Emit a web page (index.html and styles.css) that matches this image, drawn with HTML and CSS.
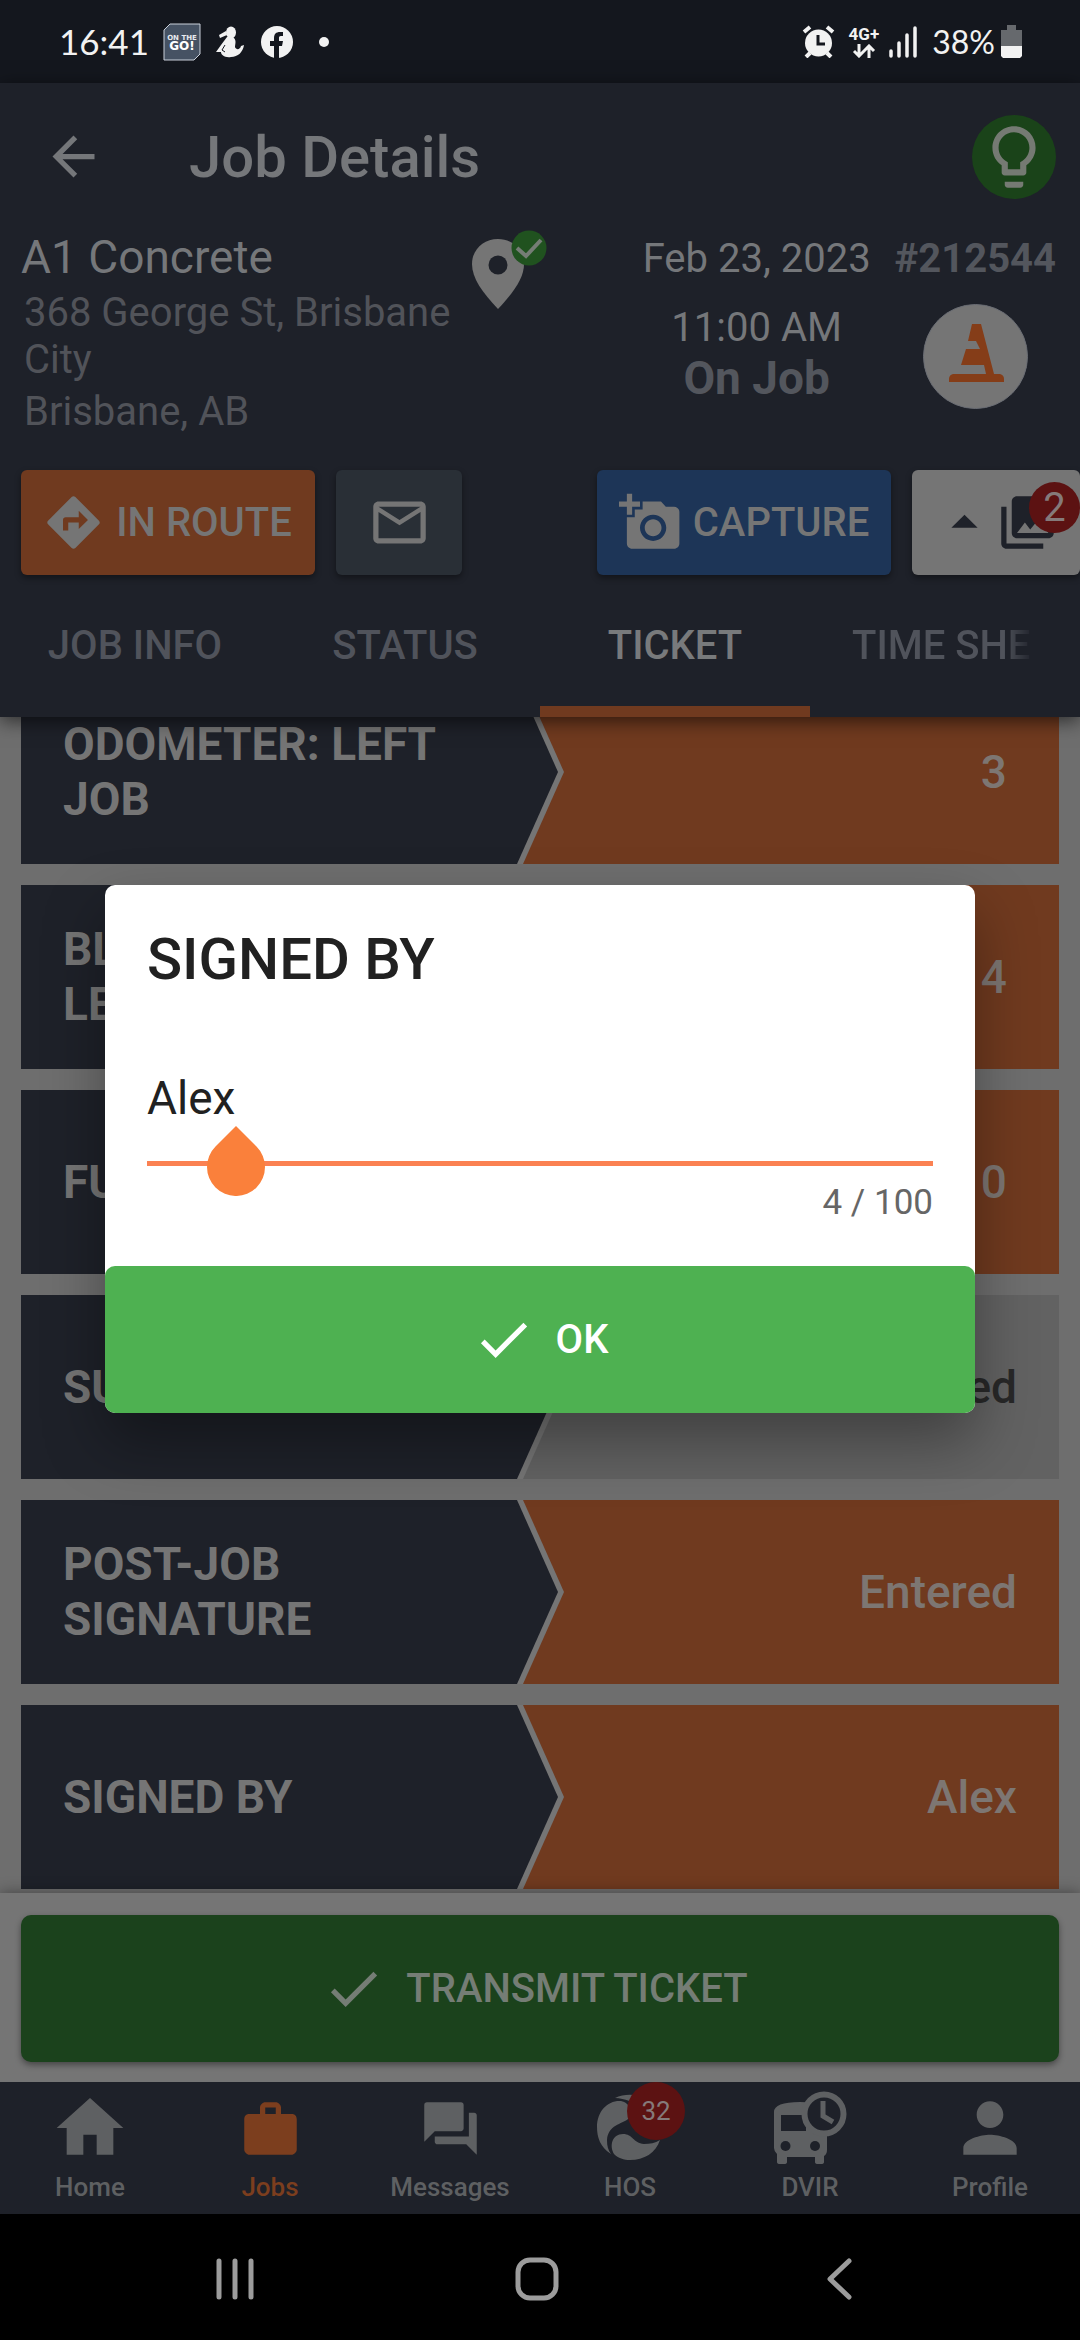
FILE: index.html
```html
<!DOCTYPE html>
<html lang="en">
<head>
<meta charset="utf-8">
<meta name="viewport" content="width=device-width, initial-scale=1">
<title>Job Details</title>
<link rel="stylesheet" href="styles.css">
</head>
<body>
<div class="statusbar">
  <div class="status-left">
    <span class="clock">16:41</span>
    <svg class="app-badge" viewBox="0 0 38 38" aria-hidden="true">
      <path d="M7 1H37V31L31 37H1V7Z" fill="#465263" stroke="#c9d0da" stroke-width="1"/>
      <text x="19" y="17" text-anchor="middle" class="tiny-top">ON THE</text>
      <text x="19" y="27" text-anchor="middle" class="tiny-go">GO!</text>
    </svg>
    <svg class="figure" viewBox="0 0 28 32" fill="#f2f2f2" aria-hidden="true">
      <ellipse cx="15" cy="6.500" rx="5" ry="6"/>
      <path d="M10 5L3 9L4 12L11 9ZM11 11H17C21 14 19 18 19 21C20 24 24 24 25 20L28 19C27 26 22 31 15 31C9 32 5 29 5 26L0 26L5 19Z"/>
      <path d="M9 19L6 24L9 26" fill="none" stroke="#14171e" stroke-width="1"/>
    </svg>
    <svg class="fb" viewBox="0 0 32 32" aria-hidden="true">
      <circle cx="16" cy="16" r="16" fill="#f2f2f2"/>
      <path d="M13 32V20H9V15H13V12C13 8 15 6 19 6H22V10H20C18 10 18 11 18 12V15H22L21 20H18V32Z" fill="#14171e"/>
    </svg>
    <span class="dot"></span>
  </div>
  <div class="status-right">
    <svg class="alarm" viewBox="0 0 33 33" aria-hidden="true">
      <circle cx="16.500" cy="18" r="13.500" fill="#f2f2f2"/>
      <path d="M2 7L8 2M25 2L31 7M8 28L4 32M25 28L29 32" stroke="#f2f2f2" stroke-width="4"/>
      <path d="M16 10V19H23" fill="none" stroke="#14171e" stroke-width="3"/>
    </svg>
    <span class="network">4G+
      <svg viewBox="0 0 24 14" aria-hidden="true"><path d="M7 0V12M2 7L7 12L12 7M17 14V2M12 7L17 2L22 7" fill="none" stroke="#f2f2f2" stroke-width="3"/></svg>
    </span>
    <svg class="signal" viewBox="0 0 28 32" aria-hidden="true"><path d="M2 25V30M10 17V30M18 9V30M26 2V30" stroke="#f2f2f2" stroke-width="3.500" stroke-linecap="round"/></svg>
    <span class="percent">38%</span>
    <svg class="battery" viewBox="0 0 21 33" aria-hidden="true"><path d="M6 0H15V5H21V21H0V5H6Z" fill="#66696d"/><path d="M0 21H21V31L19 33H2L0 31Z" fill="#f2f2f2"/></svg>
  </div>
</div>

<div class="app">
  <header class="header">
    <div class="titlebar">
      <button class="back" aria-label="Back"><svg class="icon" viewBox="0 0 24 24"><path d="M20 11H7.830l5.590-5.590L12 4l-8 8 8 8 1.410-1.410L7.830 13H20v-2z"/></svg></button>
      <h1>Job Details</h1>
      <button class="bulb" aria-label="Tips"><svg viewBox="0 0 24 24"><path d="M9 21c0 .5.4 1 1 1h4c.6 0 1-.5 1-1v-1H9v1zm3-19C8.100 2 5 5.100 5 9c0 2.400 1.200 4.500 3 5.700V17c0 .5.4 1 1 1h6c.6 0 1-.5 1-1v-2.300c1.800-1.300 3-3.400 3-5.700 0-3.900-3.100-7-7-7zm2.900 11.100l-.9.600V16h-4v-2.300l-.9-.6C7.800 12.200 7 10.600 7 9c0-2.800 2.200-5 5-5s5 2.200 5 5c0 1.600-.8 3.200-2.100 4.100z"/></svg></button>
    </div>

    <section class="job">
      <div class="customer">
        <h2>A1 Concrete</h2>
        <p>368 George St, Brisbane City</p>
        <p>Brisbane, AB</p>
      </div>
      <svg class="pin" viewBox="0 0 76 79" aria-hidden="true">
        <path d="M26 9C11 9 0 20 0 34C0 48 10 62 26 79C42 62 52 48 52 34C52 20 41 9 26 9Z" fill="#757575"/>
        <circle cx="26" cy="35" r="9.500" fill="#1e2129"/>
        <circle cx="57" cy="18" r="17.500" fill="#20521f"/>
        <path d="M45 18L54 26L69 10" fill="none" stroke="#757d75" stroke-width="4"/>
      </svg>
      <div class="schedule">
        <span class="date">Feb 23, 2023</span>
        <span class="number">#212544</span>
        <div class="when"><span class="date">11:00 AM</span><strong>On Job</strong></div>
        <svg class="cone" viewBox="0 0 105 105" aria-hidden="true">
          <circle cx="52.500" cy="52.500" r="52" fill="#757575" stroke="#6a6d74"/>
          <path d="M49 20H58L71 70H77Q81 71 81 75V78H26V75Q26 71 30 70H63L61 61H38L43 45H57L53 37H45Z" fill="#853d18"/>
        </svg>
      </div>
    </section>

    <div class="actions">
      <button class="btn route"><svg class="icon" viewBox="0 0 24 24"><path d="M21.710 11.290l-9-9c-.39-.39-1.020-.39-1.410 0l-9 9c-.39.39-.39 1.020 0 1.410l9 9c.39.39 1.020.39 1.410 0l9-9c.39-.38.39-1.010 0-1.410zM14 14.500V12h-4v3H8v-4c0-.55.45-1 1-1h5V7.500l3.500 3.500-3.500 3.500z"/></svg>IN ROUTE</button>
      <button class="btn mail" aria-label="Message"><svg class="icon" viewBox="0 0 24 24"><path d="M20 4H4c-1.100 0-1.990.9-1.990 2L2 18c0 1.100.9 2 2 2h16c1.100 0 2-.9 2-2V6c0-1.100-.9-2-2-2zm0 14H4V8l8 5 8-5v10zm-8-7L4 6h16l-8 5z"/></svg></button>
      <button class="btn capture"><svg class="icon" viewBox="0 0 24 24"><path d="M3 4V1h2v3h3v2H5v3H3V6H0V4h3zm3 6V7h3V4h7l1.830 2H21c1.100 0 2 .9 2 2v12c0 1.100-.9 2-2 2H5c-1.100 0-2-.9-2-2V10h3zm7 9c2.760 0 5-2.240 5-5s-2.240-5-5-5-5 2.240-5 5 2.240 5 5 5zm-3.200-5c0 1.770 1.430 3.200 3.200 3.200s3.200-1.430 3.200-3.200-1.430-3.200-3.200-3.200-3.200 1.430-3.200 3.200z"/></svg>CAPTURE</button>
      <button class="btn photos" aria-label="Photos, 2 new">
        <svg class="icon" viewBox="0 0 24 24"><path d="M7 14l5-5 5 5z"/></svg>
        <svg class="icon" viewBox="0 0 24 24"><path d="M22 16V4c0-1.100-.9-2-2-2H8c-1.100 0-2 .9-2 2v12c0 1.100.9 2 2 2h12c1.100 0 2-.9 2-2zm-11-4l2.030 2.710L16 11l4 5H8l3-4zM2 6v14c0 1.100.9 2 2 2h14v-2H4V6H2z"/></svg>
        <span class="photo-count">2</span>
      </button>
    </div>

    <div class="tabs" role="tablist">
      <button role="tab">JOB INFO</button>
      <button role="tab">STATUS</button>
      <button role="tab" class="active" aria-selected="true">TICKET</button>
      <button role="tab" class="cut">TIME SHEET</button>
    </div>
  </header>

  <main class="ticket">
    <dl class="row"><dt>ODOMETER: LEFT JOB</dt><dd class="num">3</dd></dl>
    <dl class="row"><dt>BLOCKS<br>LEFT JOB</dt><dd class="num">4</dd></dl>
    <dl class="row"><dt>FUEL</dt><dd class="num">0</dd></dl>
    <dl class="row empty"><dt>SURCHARGE</dt><dd>Not Entered</dd></dl>
    <dl class="row"><dt>POST-JOB SIGNATURE</dt><dd>Entered</dd></dl>
    <dl class="row"><dt>SIGNED BY</dt><dd>Alex</dd></dl>
  </main>

  <div class="submit">
    <button class="big-btn transmit"><svg class="icon" viewBox="0 0 24 24"><path d="M9 16.170L4.830 12l-1.420 1.410L9 19 21 7l-1.410-1.410z"/></svg>TRANSMIT TICKET</button>
  </div>

  <nav class="bottom-nav">
    <a href="#home"><span class="slot"><svg class="large" viewBox="0 0 24 24"><path d="M10 20v-6h4v6h5v-8h3L12 3 2 12h3v8z"/></svg></span>Home</a>
    <a href="#jobs" class="current"><span class="slot"><svg class="icon" viewBox="0 0 24 24"><path fill-rule="evenodd" d="M4 6.500H8V4C8 3 9 2 10 2H14C15 2 16 3 16 4V6.500H20C21 6.500 22 7 22 8.500V20C22 21 21 22 20 22H4C3 22 2 21 2 20V8.500C2 7 3 6.500 4 6.500ZM10 6.500H14V4H10Z"/></svg></span>Jobs</a>
    <a href="#messages"><span class="slot"><svg class="icon" viewBox="0 0 24 24"><path d="M21 6h-2v9H6v2c0 .55.45 1 1 1h11l4 4V7c0-.55-.45-1-1-1zm-4 6V3c0-.55-.45-1-1-1H3c-.55 0-1 .45-1 1v14l4-4h10c.55 0 1-.45 1-1z"/></svg></span>Messages</a>
    <a href="#hos"><span class="slot"><svg class="large" viewBox="0 0 80 80">
      <path d="M21 66C10 59 7 49 7 39C7 23 18 12 31 13C40 15 44 24 38 31C32 36 18 37 17 52C17 58 18 62 21 66Z"/>
      <path d="M24 66C19 58 22 46 33 46C43 46 43 55 54 56C60 56 65 55 70 52C66 65 54 72 40 72C34 72 28 70 24 66Z"/>
      <path d="M25 10C35 5 48 6 57 11C69 19 74 30 72 42C66 50 54 46 54 36C56 24 46 11 25 10Z"/></svg><span class="alert-count">32</span></span>HOS</a>
    <a href="#dvir"><span class="slot"><svg class="large" viewBox="0 0 80 80">
      <path fill-rule="evenodd" d="M4 24Q4 14 30 14Q57 14 57 24V62Q57 66 54 68V74Q54 76 51 76H48Q45 76 45 74V69H17V74Q17 76 14 76H10Q7 76 7 74V66Q4 63 4 60ZM11 27V43H50V27Z"/>
      <circle cx="15.500" cy="58" r="5" fill="#1e2129"/><circle cx="45" cy="58" r="5" fill="#1e2129"/>
      <path d="M34 36L57 40V46H34Z"/>
      <path d="M11 27H36V43H11Z" fill="#1e2129"/>
      <circle cx="54" cy="26" r="19.500" fill="#1e2129" stroke="#5e6062" stroke-width="6"/>
      <path d="M53 13V28L63 34" fill="none" stroke="#5e6062" stroke-width="5"/></svg></span>DVIR</a>
    <a href="#profile"><span class="slot"><svg class="large" viewBox="0 0 24 24"><path d="M12 12c2.210 0 4-1.790 4-4s-1.790-4-4-4-4 1.790-4 4 1.790 4 4 4zm0 2c-2.670 0-8 1.340-8 4v2h16v-2c0-2.660-5.330-4-8-4z"/></svg></span>Profile</a>
  </nav>

  <div class="overlay">
    <form class="dialog" role="dialog" aria-labelledby="dialog-title">
      <div class="dialog-body">
        <h2 id="dialog-title"><label for="signed-by">SIGNED BY</label></h2>
        <div class="field">
          <input id="signed-by" type="text" value="Alex" maxlength="100">
          <svg class="handle" viewBox="0 0 58 70" aria-hidden="true"><path d="M29 0L49.500 20.500A29 29 0 1 1 8.500 20.500Z" fill="#fa803b"/></svg>
        </div>
        <p class="counter">4 / 100</p>
      </div>
      <button type="button" class="big-btn ok"><svg class="icon" viewBox="0 0 24 24"><path d="M9 16.170L4.830 12l-1.420 1.410L9 19 21 7l-1.410-1.410z"/></svg>OK</button>
    </form>
  </div>
</div>

<div class="system-nav">
  <button aria-label="Recents"><svg viewBox="0 0 48 48"><path d="M8 6V42M24 6V42M40 6V42"/></svg></button>
  <button aria-label="Home"><svg viewBox="0 0 48 48"><rect x="5" y="5" width="38" height="38" rx="12"/></svg></button>
  <button aria-label="Back"><svg viewBox="0 0 48 48"><path d="M34 6L15 24L34 42"/></svg></button>
</div>
</body>
</html>
```
FILE: styles.css
```css
* { box-sizing: border-box; }

body {
  margin: 0;
  height: 100vh;
  display: flex;
  flex-direction: column;
  background: #000;
  font-family: Roboto, "Liberation Sans", sans-serif;
  font-size: 40px;
  line-height: 47px;
  color: #75777a;
}

h1, h2, p, dl, dt, dd { margin: 0; }
svg { display: block; flex: none; }

button {
  font: inherit;
  color: inherit;
  border: 0;
  padding: 0;
  background: none;
}

.icon { width: 63px; height: 63px; fill: currentColor; }

/* system status bar */
.statusbar {
  height: 83px;
  padding: 0 58px 0 59px;
  display: flex;
  align-items: center;
  justify-content: space-between;
  background: #14171e;
  color: #f2f2f2;
  font-family: Lato, sans-serif;
  font-size: 35px;
}
.status-left, .status-right { display: flex; align-items: center; }
.app-badge { width: 38px; height: 38px; margin-left: 14px; }
.tiny-top { font: 700 7px "DejaVu Sans", sans-serif; fill: #e6e9ee; }
.tiny-go { font: 700 12px "DejaVu Sans", sans-serif; fill: #fff; }
.figure { width: 28px; height: 32px; margin-left: 15px; }
.fb { width: 32px; height: 32px; margin-left: 17px; }
.dot { width: 10px; height: 10px; margin-left: 26px; border-radius: 50%; background: #f2f2f2; }
.alarm { width: 33px; height: 33px; }
.network {
  margin-left: 14px;
  display: flex;
  flex-direction: column;
  align-items: center;
  font: 700 17px/19px Roboto, sans-serif;
}
.network svg { width: 24px; height: 14px; }
.signal { width: 28px; height: 32px; margin: 0 15px 0 10px; }
.percent { font-size: 32px; }
.battery { width: 21px; height: 33px; margin-left: 6px; }

/* app frame */
.app {
  position: relative;
  flex: 1;
  min-height: 0;
  display: flex;
  flex-direction: column;
  background: #6e6e6e;
}

.header {
  position: relative;
  z-index: 1;
  background: #1e2129;
  box-shadow: 0 4px 18px rgba(0, 0, 0, .6);
}

.titlebar {
  height: 147px;
  padding: 0 24px 0 42px;
  display: flex;
  align-items: center;
}
.titlebar h1 {
  flex: 1;
  margin-left: 84px;
  font-size: 58px;
  line-height: 68px;
  font-weight: 500;
}
.bulb {
  width: 84px;
  height: 84px;
  border-radius: 50%;
  background: #1a4319;
  display: grid;
  place-items: center;
}
.bulb svg { width: 74px; height: 74px; fill: #757a73; }

.job {
  display: grid;
  grid-template-columns: minmax(0, 451fr) 76px minmax(0, 508fr);
  padding: 0 24px 35px 21px;
  align-items: start;
}
.customer h2 { font-size: 46px; line-height: 54px; font-weight: 400; }
.customer p { margin: 5px 0 0 3px; color: #515359; }
.pin { width: 76px; height: 79px; }
.schedule {
  padding-top: 5px;
  display: grid;
  grid-template-columns: auto auto;
  justify-content: end;
  justify-items: center;
  gap: 22px 24px;
}
.number { font-weight: 700; color: #53565d; }
.when { display: flex; flex-direction: column; align-items: center; }
.when strong { font-size: 46px; line-height: 54px; color: #53565d; }
.cone { width: 105px; height: 105px; }

.actions { display: flex; gap: 21px; padding-left: 21px; }
.btn {
  height: 105px;
  border-radius: 6px;
  display: flex;
  align-items: center;
  justify-content: center;
  gap: 11px;
  font-weight: 500;
  color: #757575;
  box-shadow: 0 3px 6px rgba(0, 0, 0, .4);
}
.route { width: 294px; padding-right: 2px; background: #703a1f; }
.mail { width: 126px; background: #292f36; }
.capture { width: 294px; margin-left: auto; background: #1d3557; }
.photos {
  position: relative;
  width: 168px;
  padding-left: 21px;
  justify-content: flex-start;
  gap: 0;
  background: #757575;
  color: #1e2129;
}
.photo-count {
  position: absolute;
  top: 12px;
  right: 0;
  width: 51px;
  border-radius: 50%;
  line-height: 51px;
  text-align: center;
  font-weight: 400;
  background: #5c1212;
  color: #857a7a;
}

.tabs { display: grid; grid-template-columns: repeat(4, 1fr); height: 142px; }
.tabs button {
  padding-top: 9px;
  border-bottom: 11px solid transparent;
  font-weight: 500;
  color: #50535b;
  white-space: nowrap;
}
.tabs .active { color: #787a7c; border-color: #703a1f; }
.tabs .cut {
  padding-left: 42px;
  margin-right: 46px;
  overflow: hidden;
  text-align: left;
  -webkit-mask-image: linear-gradient(to left, transparent, #000 30px);
  mask-image: linear-gradient(to left, transparent, #000 30px);
}

/* ticket rows, scrolled to the end */
.ticket {
  flex: 1;
  min-height: 0;
  overflow: hidden;
  display: flex;
  flex-direction: column;
  justify-content: flex-end;
  gap: 21px;
  padding: 0 21px 4px;
}
.row {
  flex: none;
  height: 184px;
  display: flex;
  align-items: stretch;
  background: #703a1f;
  font-size: 46px;
  line-height: 55px;
}
.row dt {
  position: relative;
  z-index: 0;
  width: calc(50% + 24px);
  flex: none;
  padding: 0 100px 0 42px;
  display: flex;
  align-items: center;
  font-weight: 700;
  color: #757575;
  background: #757575;
  clip-path: polygon(0 0, calc(100% - 41px) 0, 100% 50%, calc(100% - 41px) 100%, 0 100%);
}
.row dt::before {
  content: "";
  position: absolute;
  z-index: -1;
  inset: 0 6px 0 0;
  background: #1e2129;
  clip-path: polygon(0 0, calc(100% - 41px) 0, 100% 50%, calc(100% - 41px) 100%, 0 100%);
}
.row dd {
  flex: 1;
  padding-right: 42px;
  display: flex;
  align-items: center;
  justify-content: flex-end;
  font-weight: 500;
  color: #7d7672;
}
.row .num { padding-right: 52px; }
.empty { background: #626262; }
.empty dd { color: #282828; }

.submit {
  position: relative;
  padding: 22px 21px 20px;
  background: #757575;
  box-shadow: 0 0 14px rgba(0, 0, 0, .4);
}
.big-btn {
  width: 100%;
  height: 147px;
  border-radius: 10px;
  display: flex;
  align-items: center;
  justify-content: center;
  gap: 21px;
  font-weight: 500;
}
.transmit {
  padding-right: 10px;
  background: #1b421c;
  color: #757d75;
  box-shadow: 0 3px 6px rgba(0, 0, 0, .4);
}

.bottom-nav {
  position: relative;
  height: 132px;
  display: grid;
  grid-template-columns: repeat(6, 1fr);
  background: #1e2129;
}
.bottom-nav a {
  padding-top: 6px;
  display: flex;
  flex-direction: column;
  align-items: center;
  gap: 3px;
  font-size: 26px;
  line-height: 32px;
  font-weight: 500;
  color: #5e6062;
  text-decoration: none;
}
.bottom-nav .current { color: #7c3e1e; }
.slot {
  position: relative;
  width: 80px;
  height: 80px;
  display: grid;
  place-items: center;
}
.large { width: 80px; height: 80px; fill: currentColor; }
.alert-count {
  position: absolute;
  top: -6px;
  right: -15px;
  width: 58px;
  border-radius: 50%;
  line-height: 58px;
  text-align: center;
  font-weight: 400;
  background: #5c1212;
  color: #857a7a;
}

/* dialog */
.overlay {
  position: absolute;
  z-index: 2;
  inset: 0;
  padding: 0 105px;
  display: flex;
  align-items: center;
}
.dialog {
  flex: 1;
  border-radius: 10px;
  background: #fff;
  box-shadow: 0 28px 60px rgba(0, 0, 0, .35);
}
.dialog-body { padding: 40px 42px 42px; }
.dialog h2 {
  margin-bottom: 78px;
  font-size: 58px;
  line-height: 68px;
  font-weight: 500;
  color: #212121;
}
.field { position: relative; }
.field input {
  display: block;
  width: 100%;
  height: 95px;
  padding: 0 0 35px;
  border: 0;
  border-bottom: 5px solid #fb8152;
  outline: 0;
  background: none;
  font: 400 46px/54px Roboto, "Liberation Sans", sans-serif;
  color: #212121;
}
.handle {
  position: absolute;
  left: 60px;
  top: 55px;
  width: 58px;
  height: 70px;
}
.counter {
  margin-top: 16px;
  font-size: 35px;
  line-height: 42px;
  text-align: right;
  color: #666;
}
.ok { background: #4eb151; color: #fff; }

/* system navigation */
.system-nav {
  height: 126px;
  padding: 3px 90px 0 84px;
  display: grid;
  grid-template-columns: repeat(3, 1fr);
  background: #000;
}
.system-nav button { display: grid; place-items: center; }
.system-nav svg {
  width: 48px;
  height: 48px;
  fill: none;
  stroke: #9c9c9c;
  stroke-width: 5;
  stroke-linecap: round;
  stroke-linejoin: round;
}
```
